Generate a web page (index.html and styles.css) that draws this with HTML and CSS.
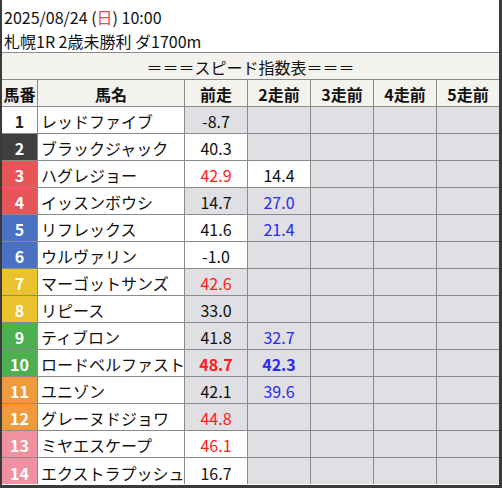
FILE: index.html
```html
<!DOCTYPE html>
<html lang="ja">
<head>
<meta charset="utf-8">
<link rel="stylesheet" href="styles.css">
</head>
<body>
<div class="frame">
  <div class="info">
    <div class="line">2025/08/24 (<span class="sun">日</span>) 10:00</div>
    <div class="line">札幌1R 2歳未勝利 ダ1700m</div>
  </div>
  <table class="tbl">
    <colgroup>
      <col class="c-no"><col class="c-name"><col class="c-v"><col class="c-v"><col class="c-v"><col class="c-v"><col class="c-last">
    </colgroup>
    <tr class="title"><td colspan="7">＝＝＝スピード指数表＝＝＝</td></tr>
    <tr class="head"><td>馬番</td><td>馬名</td><td>前走</td><td>2走前</td><td>3走前</td><td>4走前</td><td class="end">5走前</td></tr>
    <tr><td class="no g1">1</td><td class="name">レッドファイブ</td><td class="v gray">-8.7</td><td class="v gray"></td><td class="v gray"></td><td class="v gray"></td><td class="v gray end"></td></tr>
    <tr><td class="no g2">2</td><td class="name">ブラックジャック</td><td class="v">40.3</td><td class="v gray"></td><td class="v gray"></td><td class="v gray"></td><td class="v gray end"></td></tr>
    <tr><td class="no g3">3</td><td class="name">ハグレジョー</td><td class="v red">42.9</td><td class="v">14.4</td><td class="v gray"></td><td class="v gray"></td><td class="v gray end"></td></tr>
    <tr><td class="no g3">4</td><td class="name">イッスンボウシ</td><td class="v gray">14.7</td><td class="v gray blue">27.0</td><td class="v gray"></td><td class="v gray"></td><td class="v gray end"></td></tr>
    <tr><td class="no g5">5</td><td class="name">リフレックス</td><td class="v">41.6</td><td class="v gray blue">21.4</td><td class="v gray"></td><td class="v gray"></td><td class="v gray end"></td></tr>
    <tr><td class="no g5">6</td><td class="name">ウルヴァリン</td><td class="v">-1.0</td><td class="v gray"></td><td class="v gray"></td><td class="v gray"></td><td class="v gray end"></td></tr>
    <tr><td class="no g7">7</td><td class="name">マーゴットサンズ</td><td class="v gray red">42.6</td><td class="v gray"></td><td class="v gray"></td><td class="v gray"></td><td class="v gray end"></td></tr>
    <tr><td class="no g7">8</td><td class="name">リピース</td><td class="v gray">33.0</td><td class="v gray"></td><td class="v gray"></td><td class="v gray"></td><td class="v gray end"></td></tr>
    <tr><td class="no g9">9</td><td class="name">ティブロン</td><td class="v gray">41.8</td><td class="v gray blue">32.7</td><td class="v gray"></td><td class="v gray"></td><td class="v gray end"></td></tr>
    <tr><td class="no g9">10</td><td class="name">ロードベルファスト</td><td class="v gray red b">48.7</td><td class="v gray blue b">42.3</td><td class="v gray"></td><td class="v gray"></td><td class="v gray end"></td></tr>
    <tr><td class="no g11">11</td><td class="name">ユニゾン</td><td class="v gray">42.1</td><td class="v gray blue">39.6</td><td class="v gray"></td><td class="v gray"></td><td class="v gray end"></td></tr>
    <tr><td class="no g11">12</td><td class="name">グレーヌドジョワ</td><td class="v gray red">44.8</td><td class="v gray"></td><td class="v gray"></td><td class="v gray"></td><td class="v gray end"></td></tr>
    <tr><td class="no g13">13</td><td class="name">ミヤエスケープ</td><td class="v red">46.1</td><td class="v gray"></td><td class="v gray"></td><td class="v gray"></td><td class="v gray end"></td></tr>
    <tr class="lastrow"><td class="no g13">14</td><td class="name">エクストラプッシュ</td><td class="v">16.7</td><td class="v gray"></td><td class="v gray"></td><td class="v gray"></td><td class="v gray end"></td></tr>
  </table>
</div>
</body>
</html>
```
FILE: styles.css
```css
html, body {
  margin: 0;
  padding: 0;
  background: #ffffff;
}
body {
  font-family: "Noto Sans CJK JP", "Noto Sans", sans-serif;
  font-size: 16px;
  color: #111;
}
.frame {
  width: 502px;
  height: 488px;
  box-sizing: border-box;
  border-left: 2px solid #3a3a3a;
  border-right: 3px solid #3a3a3a;
  border-bottom: 3px solid #3a3a3a;
  overflow: hidden;
}
.info {
  height: 53px;
  border-bottom: 1px solid #8a8a8a;
  padding: 5px 0 0 2px;
  box-sizing: border-box;
  background: #fff;
}
.line {
  height: 24px;
  line-height: 24px;
  white-space: nowrap;
}
.sun { color: #e8484f; }
.tbl {
  border-collapse: separate;
  border-spacing: 0;
  table-layout: fixed;
  width: 497px;
}
.c-no { width: 36px; }
.c-name { width: 147px; }
.c-v { width: 63px; }
.c-last { width: 62px; }
.tbl td {
  box-sizing: border-box;
  height: 27px;
  padding: 3px 0 0 0;
  border-right: 1px solid #8a8a8a;
  border-bottom: 1px solid #8a8a8a;
  text-align: center;
  vertical-align: middle;
  white-space: nowrap;
  overflow: hidden;
  line-height: 23px;
}
.tbl td.end { border-right: none; }
.tbl tr.lastrow td { border-bottom: none; height: 26px; line-height: 22px; padding-top: 4px; }
.title td {
  background: #f3f2ed;
  border-right: none;
}
.head td {
  background: #f3f2ed;
  font-weight: bold;
}
.no {
  font-weight: bold;
  color: #fff;
}
.g1 { background: #fff; color: #222; }
.g2 { background: #3f3f3f; }
.g3 { background: #e85558; }
.g5 { background: #4a72c2; }
.g7 { background: #e9c22e; }
.g9 { background: #4caf50; }
.g11 { background: #ef9a3c; }
.g13 { background: #f091a1; }
.tbl td.name {
  text-align: left;
  padding-left: 3px;
  background: #fff;
}
.v { background: #fff; }
.tbl td.gray { background: #dfdfe4; }
.red { color: #ff1a1a; }
.blue { color: #2a2af0; }
.b { font-weight: bold; }
```
